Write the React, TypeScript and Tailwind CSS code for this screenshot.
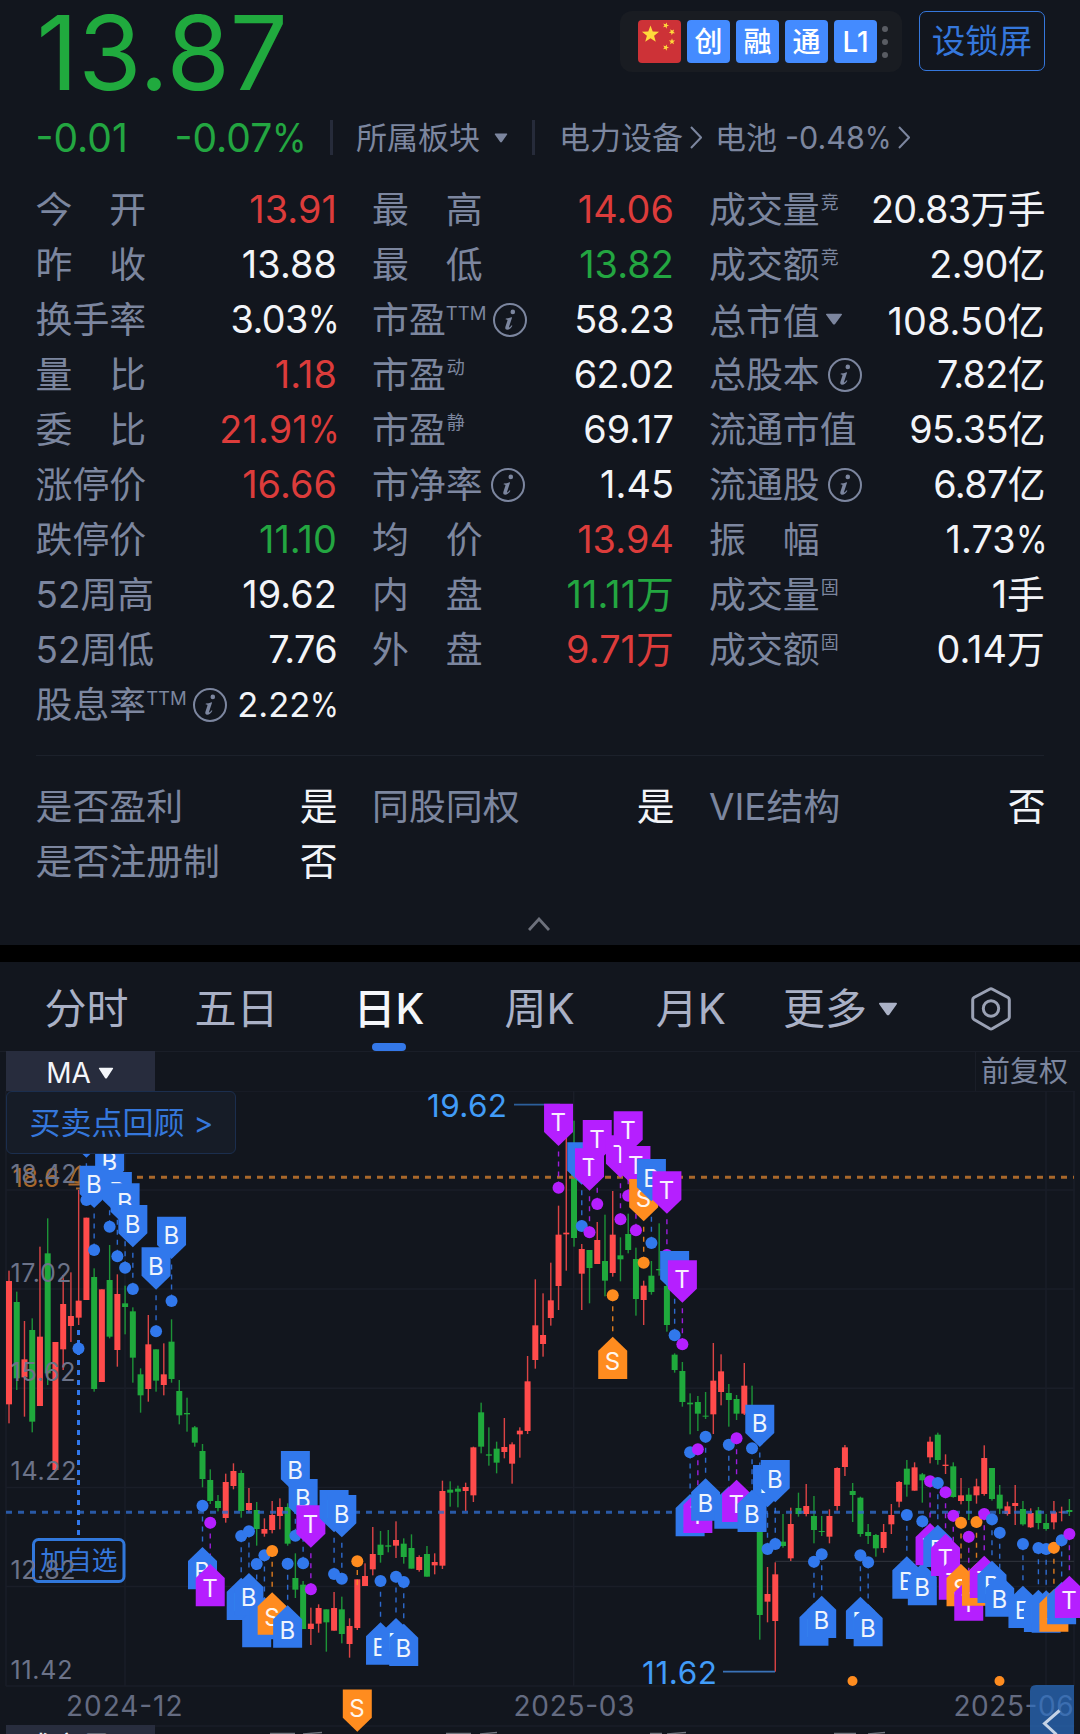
import React from "react";

const FONT = "font-['Inter','Noto_Sans_CJK_SC',sans-serif]";
const RED = "#ff4b4b";
const GREEN = "#1fa93c";
const PIN_COLORS: Record<string, string> = { B: "#3178ec", T: "#b51fff", S: "#ff8c1f" };

/* ---------- quote data ---------- */

type Cell = {
  label: string;
  sup?: string;
  info?: boolean;
  caret?: boolean;
  value: string;
  tone?: "up" | "down";
  small?: boolean;
} | null;

const METRICS: Cell[][] = [
  [
    { label: "今　开", value: "13.91", tone: "up" },
    { label: "最　高", value: "14.06", tone: "up" },
    { label: "成交量", sup: "竞", value: "20.83万手" },
  ],
  [
    { label: "昨　收", value: "13.88" },
    { label: "最　低", value: "13.82", tone: "down" },
    { label: "成交额", sup: "竞", value: "2.90亿" },
  ],
  [
    { label: "换手率", value: "3.03%" },
    { label: "市盈", sup: "TTM", info: true, value: "58.23" },
    { label: "总市值", caret: true, value: "108.50亿" },
  ],
  [
    { label: "量　比", value: "1.18", tone: "up" },
    { label: "市盈", sup: "动", value: "62.02" },
    { label: "总股本", info: true, value: "7.82亿" },
  ],
  [
    { label: "委　比", value: "21.91%", tone: "up" },
    { label: "市盈", sup: "静", value: "69.17" },
    { label: "流通市值", value: "95.35亿" },
  ],
  [
    { label: "涨停价", value: "16.66", tone: "up" },
    { label: "市净率", info: true, value: "1.45" },
    { label: "流通股", info: true, value: "6.87亿" },
  ],
  [
    { label: "跌停价", value: "11.10", tone: "down" },
    { label: "均　价", value: "13.94", tone: "up" },
    { label: "振　幅", value: "1.73%" },
  ],
  [
    { label: "52周高", value: "19.62" },
    { label: "内　盘", value: "11.11万", tone: "down" },
    { label: "成交量", sup: "固", value: "1手" },
  ],
  [
    { label: "52周低", value: "7.76" },
    { label: "外　盘", value: "9.71万", tone: "up" },
    { label: "成交额", sup: "固", value: "0.14万" },
  ],
  [{ label: "股息率", sup: "TTM", info: true, value: "2.22%", small: true }, null, null],
];

const FLAGS: Cell[][] = [
  [
    { label: "是否盈利", value: "是" },
    { label: "同股同权", value: "是" },
    { label: "VIE结构", value: "否" },
  ],
  [{ label: "是否注册制", value: "否" }, null, null],
];

/* ---------- chart data: thirds of a pixel measured from a base line ---------- */

type Row = [number, number, number, number, number];
const up = 1;
const dn = 0;

const SERIES: { base: number; rows: Row[] }[] = [
  {
    base: 1140,
    rows: [
      [up, 392, 423, 793, 850], [dn, 455, 486, 715, 750], [up, 543, 658, 712, 830],
      [dn, 535, 570, 845, 877], [up, 320, 590, 798, 798], [dn, 235, 340, 700, 735],
      [up, 606, 606, 990, 990], [up, 405, 492, 628, 690], [up, 397, 528, 558, 606],
      [up, 150, 482, 533, 555], [up, 233, 233, 480, 480], [dn, 385, 411, 747, 755],
      [up, 448, 448, 726, 726], [dn, 315, 420, 590, 595], [up, 403, 462, 630, 680],
      [dn, 437, 490, 501, 583], [dn, 502, 514, 653, 728], [dn, 685, 703, 766, 818],
      [up, 525, 613, 747, 785], [dn, 628, 628, 722, 755], [up, 610, 703, 735, 766],
      [dn, 538, 605, 717, 728], [dn, 720, 753, 826, 853], [dn, 773, 819, 823, 875],
      [dn, 858, 862, 908, 920],
    ],
  },
  {
    base: 1430,
    rows: [
      [dn, 42, 63, 147, 172], [dn, 118, 150, 213, 222], [dn, 195, 213, 234, 244],
      [up, 131, 156, 264, 278], [up, 100, 123, 168, 178], [dn, 121, 129, 243, 263],
      [up, 174, 219, 240, 248], [dn, 216, 240, 297, 347], [up, 265, 297, 311, 320],
    ],
  },
  {
    base: 1380,
    rows: [
      [up, 363, 405, 450, 460], [up, 355, 381, 408, 448], [dn, 370, 381, 491, 497],
      [dn, 520, 594, 629, 654], [dn, 603, 614, 747, 747], [up, 683, 731, 747, 795],
      [up, 673, 684, 731, 758], [dn, 688, 688, 727, 815], [up, 636, 684, 752, 752],
      [dn, 650, 688, 762, 790], [up, 715, 738, 792, 833], [up, 598, 598, 744, 750],
      [up, 550, 588, 618, 618], [up, 441, 522, 568, 586], [dn, 453, 494, 525, 548],
      [dn, 450, 496, 500, 517], [up, 424, 480, 497, 534], [dn, 475, 491, 531, 551],
      [dn, 463, 504, 566, 566], [up, 526, 531, 570, 575], [dn, 498, 522, 590, 590],
      [up, 520, 546, 556, 583], [up, 302, 333, 557, 567], [dn, 304, 329, 338, 380],
      [dn, 317, 326, 335, 382], [up, 308, 321, 333, 393], [up, 200, 202, 346, 366],
      [dn, 68, 97, 200, 220], [dn, 142, 223, 227, 257], [dn, 185, 206, 248, 280],
      [up, 114, 201, 216, 235], [up, 187, 193, 251, 311], [up, 142, 152, 163, 233],
    ],
  },
  {
    base: 1080,
    rows: [
      [up, 828, 904, 1053, 1062], [up, 598, 736, 840, 866], [up, 640, 765, 792, 830],
      [up, 548, 661, 714, 737], [up, 377, 464, 618, 690], [up, 170, 458, 463, 572],
      [dn, 122, 280, 474, 500], [up, 492, 507, 581, 690], [dn, 510, 510, 564, 670],
      [up, 426, 480, 552, 552], [dn, 404, 543, 602, 649], [up, 333, 464, 579, 590],
      [dn, 472, 526, 538, 604], [dn, 401, 462, 510, 520], [dn, 503, 537, 657, 707],
      [up, 602, 617, 660, 735], [dn, 543, 587, 636, 644], [dn, 430, 567, 571, 587],
      [dn, 600, 618, 735, 755], [dn, 820, 824, 870, 878],
    ],
  },
  {
    base: 1240,
    rows: [
      [dn, 366, 393, 486, 500], [dn, 460, 488, 493, 583], [dn, 468, 486, 521, 573],
      [dn, 456, 527, 530, 537], [up, 309, 422, 523, 582], [up, 343, 394, 456, 496],
      [dn, 432, 459, 480, 560], [dn, 465, 477, 521, 540], [up, 369, 437, 521, 525],
      [dn, 437, 510, 560, 570], [dn, 700, 720, 1125, 1199], [up, 981, 1062, 1085, 1147],
      [up, 967, 1003, 1143, 1295], [dn, 822, 905, 918, 923], [up, 803, 852, 955, 963],
      [dn, 758, 804, 822, 830], [up, 732, 798, 822, 829], [dn, 768, 828, 870, 910],
      [dn, 828, 873, 876, 888], [up, 808, 828, 890, 910], [up, 682, 684, 798, 812],
      [up, 615, 622, 681, 708], [dn, 729, 753, 765, 846],
    ],
  },
  {
    base: 1400,
    rows: [
      [dn, 290, 293, 402, 410], [dn, 372, 396, 408, 432], [dn, 402, 405, 445, 470],
      [up, 372, 396, 444, 458], [up, 312, 345, 373, 402], [up, 243, 246, 305, 322],
      [dn, 180, 206, 254, 290], [up, 187, 202, 272, 272], [dn, 219, 223, 241, 308],
      [up, 110, 125, 172, 190], [dn, 98, 104, 180, 194], [up, 163, 194, 198, 222],
      [dn, 187, 199, 291, 293], [up, 234, 286, 303, 313], [dn, 264, 284, 303, 360],
      [up, 236, 259, 286, 311], [up, 136, 174, 282, 287], [dn, 204, 204, 297, 302],
      [dn, 255, 284, 326, 342], [up, 305, 319, 342, 347], [up, 255, 309, 318, 375],
      [dn, 303, 327, 373, 377], [up, 325, 339, 382, 384], [dn, 321, 331, 369, 388],
      [dn, 342, 369, 387, 392], [up, 303, 337, 367, 388], [up, 320, 335, 338, 364],
      [dn, 297, 330, 336, 348],
    ],
  },
];

const xAt = (i: number) => 9 + i * 7.74;

const CANDLES = SERIES.flatMap(({ base, rows }) =>
  rows.map(([dir, h, t, b, l]) => ({
    rising: dir === up,
    high: base + h / 3,
    top: base + t / 3,
    bottom: base + b / 3,
    low: base + l / 3,
  })),
);

/* trade markers: [candle, letter, points down, tip, dot] */
type Mark = [number, string, boolean, number, number];
const D = true;
const U = false;

const MARKS: { base: number; rows: Mark[] }[] = [
  {
    base: 1140,
    rows: [
      [10, "B", D, 53, 180], [13, "B", D, 134, 260], [11, "B", D, 204, 330],
      [14, "B", D, 223, 349], [15, "B", D, 257, 383], [16, "B", D, 322, 447],
      [21, "B", D, 357, 483], [19, "B", D, 449, 574],
    ],
  },
  {
    base: 1430,
    rows: [
      [25, "B", U, 351, 227], [26, "T", U, 402, 278], [30, "B", U, 443, 318],
      [32, "B", U, 525, 402], [31, "B", U, 429, 304], [33, "B", U, 501, 376],
    ],
  },
  {
    base: 1380,
    rows: [
      [34, "S", U, 637, 513], [36, "B", U, 676, 551], [37, "B", D, 340, 467],
      [38, "B", D, 424, 550], [39, "T", D, 503, 628], [42, "B", D, 457, 582],
      [43, "B", D, 472, 596], [48, "B", U, 727, 603], [50, "B", U, 714, 590],
      [51, "B", U, 731, 606],
    ],
  },
  {
    base: 1080,
    rows: [
      [71, "T", D, 198, 323], [74, "B", D, 314, 438], [75, "T", D, 332, 457],
      [76, "T", D, 247, 372], [78, "S", U, 770, 646], [79, "T", D, 293, 418],
      [80, "T", D, 221, 347], [81, "T", D, 325, 451], [82, "S", D, 424, 548],
      [83, "B", D, 364, 489], [85, "T", D, 401, 525], [86, "B", D, 640, 766],
      [87, "T", D, 668, 793],
    ],
  },
  {
    base: 1240,
    rows: [
      [88, "B", U, 762, 637], [89, "T", U, 752, 628], [90, "B", U, 715, 590],
      [93, "B", U, 739, 614], [94, "T", U, 719, 595], [97, "B", D, 621, 746],
      [98, "B", D, 802, 927], [96, "B", U, 749, 625], [99, "B", D, 787, 912],
      [104, "B", U, 1090, 965], [105, "B", U, 1067, 943],
    ],
  },
  {
    base: 1400,
    rows: [
      [110, "B", U, 590, 466], [111, "B", U, 612, 487], [116, "B", U, 469, 345],
      [118, "B", U, 489, 364], [119, "T", U, 369, 244], [120, "B", U, 374, 249],
      [121, "T", U, 401, 277], [122, "T", U, 472, 347], [123, "S", U, 492, 368],
      [124, "T", U, 535, 410], [125, "S", U, 490, 366], [126, "T", U, 467, 342],
      [127, "B", U, 482, 358], [128, "B", U, 523, 398], [131, "B", U, 557, 432],
      [133, "B", U, 569, 444], [134, "B", U, 571, 447], [135, "S", U, 568, 443],
      [136, "B", U, 546, 421], [137, "T", U, 527, 402],
    ],
  },
];

const PINS = MARKS.flatMap(({ base, rows }) =>
  rows.map(([i, letter, down, tip, dot]) => ({
    x: xAt(i),
    letter,
    down,
    tip: base + tip / 3,
    dot: base + dot / 3,
  })),
);

/* ---------- small pieces ---------- */

function Caret({ className }: { className: string }) {
  return (
    <svg viewBox="0 0 16 11" className={className} preserveAspectRatio="none">
      <path d="M1.4 0.6h13.2q1 .3.4 1.1L9 10q-1 1-2 0L1 1.700q-.6-.8.4-1.100z" fill="currentColor" />
    </svg>
  );
}

function ChevronRight({ className }: { className: string }) {
  return (
    <svg viewBox="0 0 12 23" className={className} fill="none" stroke="currentColor" strokeWidth="2">
      <path d="M1 1l10 10.500L1 22" />
    </svg>
  );
}

function InfoIcon() {
  return (
    <svg viewBox="0 0 36 36" className="size-[36px] shrink-0" fill="none">
      <circle cx="18" cy="18" r="16" stroke="currentColor" strokeWidth="2" />
      <circle cx="20.800" cy="9.900" r="2.300" fill="currentColor" />
      <path
        d="M13.800 16.600c2-.2 3.800-.7 5.800-1.400l.5.2-3.100 9.500c-.2.8.3.9 1 .2.6-.5 1.100-1.200 1.600-1.900l.8.500c-1.500 2.600-3.300 4-5.200 4-1.800 0-2.300-1.200-1.700-3.100l1.900-5.900c.2-.8 0-1.100-1.700-1.200z"
        fill="currentColor"
      />
    </svg>
  );
}

/* Number followed by a condensed percent sign */
function Figure({ text }: { text: string }) {
  if (!text.endsWith("%")) return <>{text}</>;
  return (
    <>
      {text.slice(0, -1)}
      <span className="inline-block w-[0.775em] origin-left scale-x-[0.850]">%</span>
    </>
  );
}

function Pin({ x, tip, down, letter }: { x: number; tip: number; down: boolean; letter: string }) {
  const s = down ? -1 : 1;
  const pts = [
    [x, tip],
    [x + 14.5, tip + s * 14],
    [x + 14.5, tip + s * 42.3],
    [x - 14.5, tip + s * 42.3],
    [x - 14.5, tip + s * 14],
  ];
  return (
    <g>
      <polygon points={pts.map((p) => p.join(",")).join(" ")} fill={PIN_COLORS[letter]} />
      <text x={x - 0.3} y={down ? tip - 14.8 : tip + 33.3} fontSize="24" textAnchor="middle" fill="#fff" opacity="0.92">
        {letter}
      </text>
    </g>
  );
}

function MetricCell({ cell }: { cell: Cell }) {
  if (!cell) return <div />;
  const tone = cell.tone === "up" ? "text-[#dc3c3b]" : cell.tone === "down" ? "text-[#23a641]" : "text-[#f2f4f8]";
  const isTtm = cell.sup === "TTM";
  const tracking = cell.value.includes("1") ? "tracking-[0.100px]" : "tracking-[-0.600px]";
  return (
    <div className={`flex h-[55px] items-center ${cell.caret ? "relative top-[2px]" : ""}`}>
      <span className="whitespace-pre text-[36.900px] leading-[55px] text-[#7c869f]">{cell.label}</span>
      {cell.sup && (
        <span
          className={`self-start text-[#7c869f] ${
            isTtm ? "mt-[9px] text-[18.500px] leading-[24px]" : "ml-[1px] mt-[9px] text-[18px] leading-[24px]"
          }`}
        >
          {cell.sup}
        </span>
      )}
      {cell.info && (
        <span className={`flex text-[#7c869f] ${isTtm ? "ml-[5.500px]" : "ml-[7px]"}`}>
          <InfoIcon />
        </span>
      )}
      {cell.caret && <Caret className="ml-[5px] -mt-[6px] h-[12px] w-[18px] text-[#7c869f]" />}
      <span
        className={`ml-auto whitespace-nowrap leading-[55px] ${
          cell.small ? "text-[34.500px]" : `text-[37.800px] ${tracking}`
        } ${tone}`}
      >
        <Figure text={cell.value} />
      </span>
    </div>
  );
}

function MetricGrid({ rows }: { rows: Cell[][] }) {
  return (
    <div className="grid grid-cols-[301.500px_302px_336px] gap-x-[35px] pl-[35.500px]">
      {rows.flatMap((row, r) => row.map((cell, c) => <MetricCell key={`${r}-${c}`} cell={cell} />))}
    </div>
  );
}

function Star({ cx, cy, r, rot = 0 }: { cx: number; cy: number; r: number; rot?: number }) {
  const pts = Array.from({ length: 10 }, (_, k) => {
    const a = ((k * 36 - 90 + rot) * Math.PI) / 180;
    const rr = k % 2 ? r * 0.42 : r;
    return `${(cx + rr * Math.cos(a)).toFixed(2)},${(cy + rr * Math.sin(a)).toFixed(2)}`;
  }).join(" ");
  return <polygon points={pts} fill="#ffd93b" />;
}

function Header() {
  return (
    <header className="flex h-[102px] items-start justify-between pl-[36.500px] pr-[35px]">
      <div className="-mt-[9px] text-[102.500px] leading-[124px] text-[#20aa3e]">13.87</div>
      <div className="mt-[11px] flex items-start gap-[17px]">
        <div className="flex h-[61px] w-[282px] items-center gap-[6px] rounded-[12px] bg-[#191c22] pl-[18px]">
          <svg viewBox="0 0 43 43" className="size-[43px] rounded-[4px] bg-[#cd3237]">
            <Star cx={12.5} cy={14.500} r={9} />
            <Star cx={27.800} cy={5.5} r={3.300} rot={20} />
            <Star cx={34} cy={12} r={3.300} rot={40} />
            <Star cx={34} cy={21.500} r={3.300} />
            <Star cx={27.800} cy={27.500} r={3.300} rot={20} />
          </svg>
          {["创", "融", "通", "L1"].map((t) => (
            <div
              key={t}
              className="flex size-[43px] items-center justify-center rounded-[4px] bg-[#448bff] text-[28px] font-medium leading-none text-white"
            >
              {t}
            </div>
          ))}
          <div className="-ml-[1px] flex flex-col gap-[7px]">
            <i className="size-[6px] rounded-full bg-[#595c63]" />
            <i className="size-[6px] rounded-full bg-[#595c63]" />
            <i className="size-[6px] rounded-full bg-[#595c63]" />
          </div>
        </div>
        <div className="flex h-[60px] w-[126px] items-center justify-center rounded-[7px] border border-[#3577dc] pt-[1px] text-[33.500px] leading-none text-[#3577dc]">
          设锁屏
        </div>
      </div>
    </header>
  );
}

function ChangeRow() {
  return (
    <div className="flex h-[72px] items-center pb-[1px] pl-[35.500px] text-[31px] leading-[40px] text-[#7c869f]">
      <span className="w-[139px] whitespace-nowrap text-[39px] text-[#23a641]">-0.01</span>
      <span className="w-[155.500px] whitespace-nowrap text-[39px] text-[#23a641]">
        -0.07<span className="inline-block origin-left scale-x-[0.900]">%</span>
      </span>
      <i className="h-[35px] w-[3px] bg-[#262b3a]" />
      <span className="ml-[23px]">所属板块</span>
      <Caret className="ml-[14px] h-[10px] w-[14px]" />
      <i className="ml-[24px] h-[35px] w-[3px] bg-[#262b3a]" />
      <span className="ml-[24px]">电力设备</span>
      <ChevronRight className="ml-[7px] h-[23px] w-[12px]" />
      <span className="ml-[13px] w-[70px] whitespace-nowrap">电池</span>
      <span className="w-[104px] whitespace-nowrap text-[30.500px]">
        -0.48<span className="inline-block w-[0.780em] origin-left scale-x-[0.880]">%</span>
      </span>
      <ChevronRight className="ml-[9px] h-[23px] w-[12px]" />
    </div>
  );
}

function Tabs() {
  return (
    <nav className="flex h-[89px] items-center whitespace-nowrap pl-[44.500px] text-[42px] leading-[60px] text-[#aab1c6]">
      <span className="mt-[5px]">分时</span>
      <span className="ml-[66px] mt-[5px]">五日</span>
      <div className="relative ml-[75px] mt-[5px] text-[#f4f6fa]">
        <span className="font-medium">日K</span>
        <i className="absolute left-[18px] top-[64px] h-[8px] w-[34px] rounded-full bg-[#3478e8]" />
      </div>
      <span className="ml-[80px] mt-[5px]">周K</span>
      <span className="ml-[81px] mt-[5px]">月K</span>
      <span className="ml-[57px] mt-[5px]">更多</span>
      <Caret className="ml-[11px] mt-[4px] h-[14px] w-[20px]" />
      <svg viewBox="0 0 42 46" className="ml-[72.500px] mt-[5px] h-[46px] w-[42px]" fill="none" stroke="#9aa1b4" strokeWidth="3">
        <path d="M19.500 3.200q1.500-.8 3 0L38 11.500q1.300.8 1.300 2.300v17.400q0 1.500-1.300 2.300L22.500 42.500q-1.500.8-3 0L4 33.500q-1.300-.8-1.300-2.300V13.800q0-1.500 1.300-2.300z" />
        <circle cx="21" cy="22.500" r="7.700" />
      </svg>
    </nav>
  );
}

function AxisText({ x, y, w, size, fill, children }: { x: number; y: number; w: number; size: number; fill: string; children: string }) {
  return (
    <text x={x} y={y} fontSize={size} fill={fill} textLength={w}>
      {children}
    </text>
  );
}

function KChart() {
  const prices = [
    ["18.42", 1182.7, 66], ["17.02", 1282, 61], ["15.62", 1380.500, 65],
    ["14.22", 1480, 66], ["12.82", 1579, 65], ["11.42", 1679, 62],
  ] as [string, number, number][];
  return (
    <svg viewBox="0 1091 1080 643" className="block h-[643px] w-[1080px]">
      <g stroke="#1a1e28" strokeWidth="1.500">
        {[1091, 1190, 1289, 1388.3, 1487.4, 1586.500, 1686, 1726].map((y) => (
          <line key={y} x1="6" x2="1074.500" y1={y} y2={y} />
        ))}
        {[6, 125, 573.700, 1046, 1074].map((x) => (
          <line key={x} x1={x} x2={x} y1="1091" y2="1686" />
        ))}
      </g>
      <line x1="775" x2="1074" y1="1561.300" y2="1561.300" stroke="#2b2f38" strokeWidth="1.200" />

      {CANDLES.map((c, i) => {
        const color = c.rising ? RED : GREEN;
        return (
          <g key={i} fill={color}>
            <rect x={xAt(i) - 0.7} y={c.high} width="1.400" height={c.low - c.high} opacity="0.850" />
            <rect x={xAt(i) - 3} y={c.top} width="6" height={Math.max(1, c.bottom - c.top)} />
          </g>
        );
      })}

      <line x1="137" x2="1074" y1="1177.300" y2="1177.300" stroke="#a9682b" strokeWidth="3" strokeDasharray="6 6" />
      <line x1="6" x2="1074" y1="1512.300" y2="1512.300" stroke="#2f6ac8" strokeOpacity="0.800" strokeWidth="3" strokeDasharray="6 6" />

      <AxisText x={427} y={1117.3} w={80} size={31.500} fill="#419cf8">19.62</AxisText>
      <line x1="514" x2="560" y1="1104.700" y2="1104.700" stroke="#2c5f9b" strokeWidth="1.800" />
      <AxisText x={642} y={1684.3} w={75} size={31.500} fill="#419cf8">11.62</AxisText>
      <line x1="723" x2="775" y1="1671.700" y2="1671.700" stroke="#3a72b8" strokeWidth="1.800" />

      {/* watch-list entry point */}
      <line x1="78.500" x2="78.500" y1="1330" y2="1538" stroke="#3178ec" strokeWidth="3" strokeDasharray="5 5" />
      <circle cx="78.500" cy="1348.500" r="6" fill="#3178ec" />
      <rect x="33.500" y="1539.500" width="90.500" height="42" rx="5" fill="none" stroke="#3178dc" strokeWidth="3" />
      <text x="78.800" y="1569.800" fontSize="25.700" textAnchor="middle" fill="#3577dc">加自选</text>

      <AxisText x={12.5} y={1187} w={47} size={25} fill="#a9682b">18.6</AxisText>
      <path d="M68.500 1184.500h13M70 1181.500c3-3 3-12 9.500-15v16zM76 1188.500h5" fill="none" stroke="#a9682b" strokeWidth="2" />
      {prices.map(([t, y, w]) => (
        <AxisText key={t} x={10.5} y={y} w={w} size={25} fill="#6c7389">{t}</AxisText>
      ))}
      <AxisText x={66} y={1715.500} w={116.500} size={28} fill="#646b81">2024-12</AxisText>
      <AxisText x={513.500} y={1715.500} w={121} size={28} fill="#646b81">2025-03</AxisText>
      <AxisText x={953.500} y={1715.500} w={120} size={28} fill="#646b81">2025-06</AxisText>

      {PINS.map((p, i) => (
        <line
          key={i}
          x1={p.x} x2={p.x}
          y1={p.down ? p.tip + 5.5 : p.tip - 5.5} y2={p.dot}
          stroke={PIN_COLORS[p.letter]} strokeOpacity="0.850" strokeWidth="1.400" strokeDasharray="5 5"
        />
      ))}
      <line x1={xAt(45)} x2={xAt(45)} y1="1570" y2="1585" stroke={PIN_COLORS.S} strokeOpacity="0.850" strokeWidth="1.400" strokeDasharray="5 5" />
      {PINS.map((p, i) => (
        <circle key={i} cx={p.x} cy={p.dot} r="6" fill={PIN_COLORS[p.letter]} />
      ))}
      <circle cx={xAt(45)} cy="1561.300" r="6" fill={PIN_COLORS.S} />
      <circle cx="852.500" cy="1681" r="5" fill={PIN_COLORS.S} />
      <circle cx="999.500" cy="1681" r="5" fill={PIN_COLORS.S} />
      {PINS.map((p, i) => (
        <Pin key={i} x={p.x} tip={p.tip} down={p.down} letter={p.letter} />
      ))}

      {/* next pane's header, cut by the fold */}
      <rect x="6" y="1725" width="149" height="9" fill="#282d3e" />
      <text x="24" y="1758" fontSize="29" fill="#f2f4f8">成交量</text>
      <g stroke="#71757e" strokeWidth="1.300">
        <path d="M270 1733.500h25M303 1734l19-1.500M446 1733.500h25M480 1734l17-1.500M650 1733.500h12M667 1734l19-1.500M834 1733.500h22M868 1734l17-1.500" />
      </g>

      <Pin x={xAt(45)} tip={1731.700} down letter="S" />

      <path d="M1036 1685h38v49h-44v-43q0-6 6-6z" fill="#2b6fc4" fillOpacity="0.700" />
      <path d="M1059.500 1710.500l-15 13 12 11" fill="none" stroke="#c5d3e6" strokeWidth="3" />
    </svg>
  );
}

export default function App() {
  return (
    <div className={`h-[1734px] w-[1080px] overflow-hidden bg-[#12161e] ${FONT}`}>
      <section className="h-[945px]">
        <Header />
        <ChangeRow />
        <div className="pt-[8px]">
          <MetricGrid rows={METRICS} />
        </div>
        <div className="mx-[36px] mt-[23px] h-[1px] bg-[#1c212b]" />
        <div className="mt-[23px]">
          <MetricGrid rows={FLAGS} />
        </div>
        <svg viewBox="0 0 22 14" className="ml-[528px] mt-[28px] h-[14px] w-[22px]" fill="none" stroke="#6d717c" strokeWidth="2.800">
          <path d="M1 13L11 2l10 11" />
        </svg>
      </section>
      <div className="h-[17px] bg-black" />
      <section>
        <Tabs />
        <div className="flex h-[40px] items-stretch border-t border-[#1a1e28] pr-[6px]">
          <div className="-mt-[1px] ml-[6px] flex w-[149px] items-center justify-center bg-[#272c3d] pr-[1px] pt-[3px] text-[28px] leading-none text-[#f4f6fa]">
            MA
            <Caret className="ml-[7px] h-[12px] w-[16px]" />
          </div>
          <div className="ml-auto flex w-[99px] items-center justify-end whitespace-nowrap border-l border-[#1a1e28] pr-[6px] text-[29px] leading-none text-[#7c869f]">
            前复权
          </div>
        </div>
        <div className="relative">
          <KChart />
          <div className="absolute left-[6px] top-0 flex h-[63px] w-[230px] items-center whitespace-nowrap rounded-[6px] border border-[#1b2e4e] bg-[#161c27] pl-[22.500px] text-[31px] leading-none text-[#3577dc]">
            买卖点回顾
            <span className="ml-[9px] text-[30px]">&gt;</span>
          </div>
        </div>
      </section>
    </div>
  );
}
